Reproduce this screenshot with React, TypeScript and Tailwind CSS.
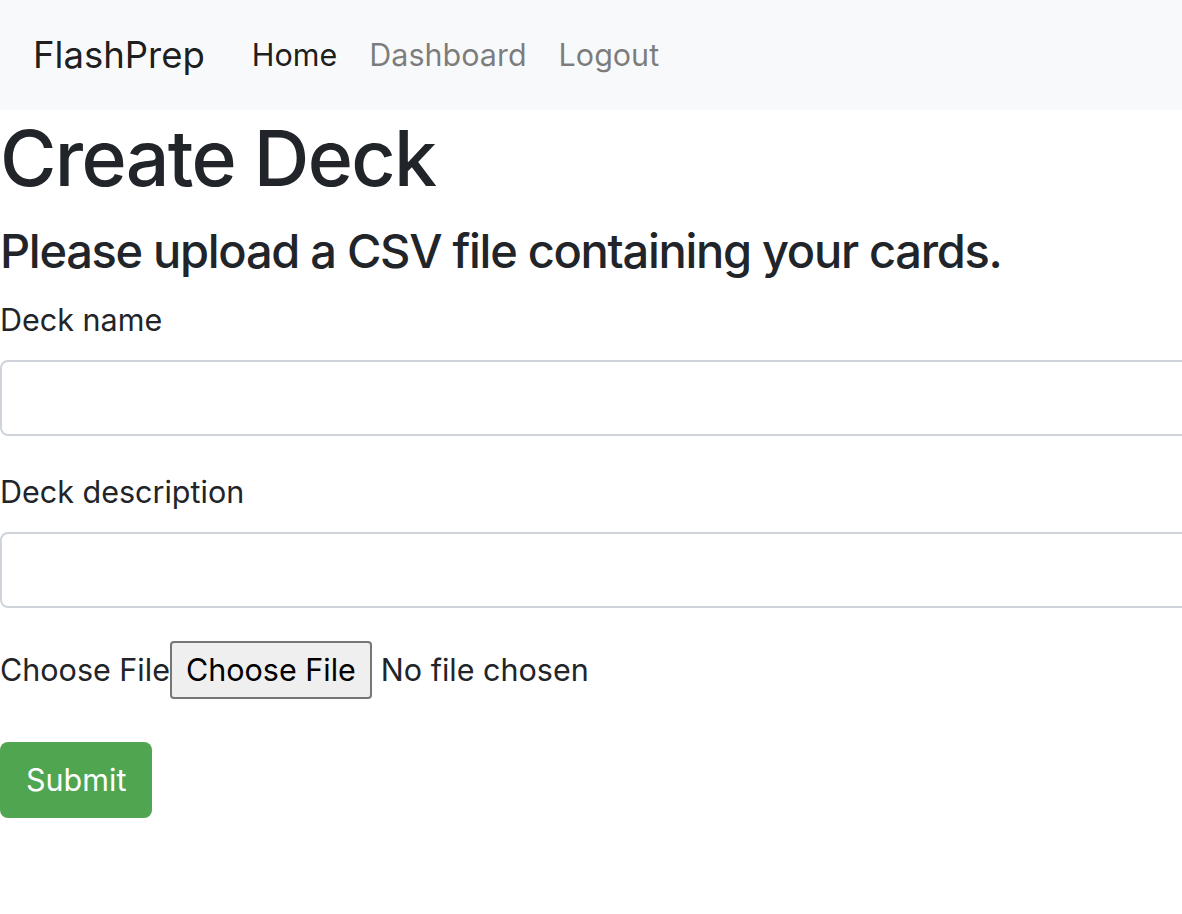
export default function App() {
  return (
    <div className="min-h-screen w-full overflow-hidden bg-white text-[#212529] font-['Inter','Liberation_Sans',sans-serif]">
      <nav className="flex h-[110px] items-center bg-[#f8f9fa] px-[33px]">
        <a href="#" className="mr-[31px] text-[36.5px] leading-[60px] text-black/90">
          FlashPrep
        </a>
        <ul className="flex items-center text-[30.5px] leading-[48px]">
          <li>
            <a href="#" className="px-[16px] text-black/90">Home</a>
          </li>
          <li>
            <a href="#" className="px-[16px] text-black/50">Dashboard</a>
          </li>
          <li>
            <a href="#" className="px-[16px] text-black/50">Logout</a>
          </li>
        </ul>
      </nav>

      <h1 className="mb-[16px] text-[77px] font-medium leading-[96px] tracking-[-1.7px]">
        Create Deck
      </h1>
      <h4 className="mb-[16px] text-[47px] font-medium leading-[58px] tracking-[-1.3px]">
        Please upload a CSV file containing your cards.
      </h4>

      <form className="text-[30.5px] leading-[48px]">
        <div className="mb-[32px]">
          <label className="mb-[16px] block">Deck name</label>
          <input
            type="text"
            className="block h-[76px] w-[1300px] rounded-[8px] border-2 border-[#ced4da] bg-white px-[24px]"
          />
        </div>
        <div className="mb-[32px]">
          <label className="mb-[16px] block">Deck description</label>
          <input
            type="text"
            className="block h-[76px] w-[1300px] rounded-[8px] border-2 border-[#ced4da] bg-white px-[24px]"
          />
        </div>
        <div className="mb-[42px] flex h-[60px] items-center">
          <span>Choose File</span>
          <span className="ml-[0px] flex h-[58px] items-center rounded-[4px] border-2 border-[#767676] bg-[#efefef] px-[14px] text-black">
            Choose File
          </span>
          <span className="ml-[9px]">No file chosen</span>
        </div>
        <button
          type="button"
          className="h-[76px] rounded-[8px] bg-[#50a550] px-[26px] text-white"
        >
          Submit
        </button>
      </form>
    </div>
  );
}
